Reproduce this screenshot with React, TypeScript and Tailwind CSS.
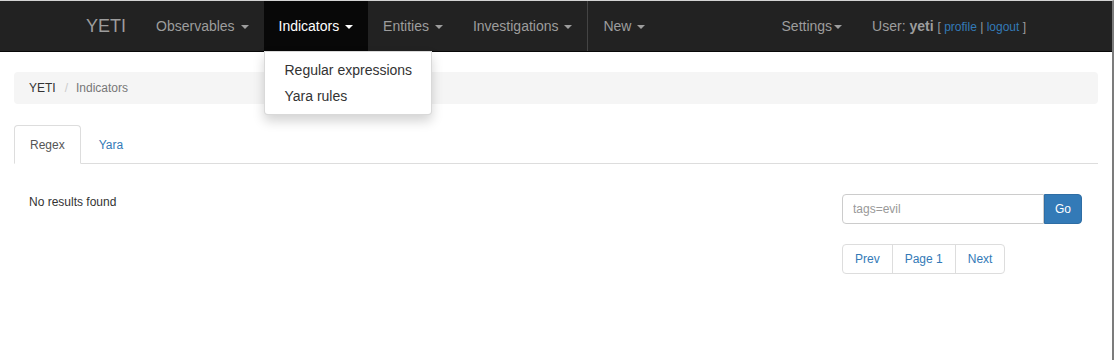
import React from 'react';

const Caret = () => (
  <span className="inline-block w-0 h-0 ml-[2px] align-middle border-t-4 border-x-4 border-x-transparent border-t-current" />
);

const navItems = ['Observables', 'Indicators', 'Entities', 'Investigations'];

export default function App() {
  return (
    <div className="w-[1114px] h-[360px] overflow-hidden bg-white border-t border-t-[#d4d4d4] border-r-2 border-r-[#7c7c7c] font-['Liberation_Sans',Arial,sans-serif] text-[14px] text-[#333]">
      {/* Top navbar */}
      <nav className="h-[51px] bg-[#222] border-b border-b-[#080808]">
        <div className="w-[970px] mx-auto px-[15px] h-[50px] flex">
          <a className="-ml-[15px] px-[15px] text-[18px] leading-[50px] text-[#9d9d9d]">YETI</a>
          <ul className="flex">
            {navItems.map((item) => {
              const active = item === 'Indicators';
              return (
                <li key={item} className="relative">
                  <a
                    className={
                      active
                        ? 'block px-[15px] py-[15px] leading-[20px] whitespace-pre text-white bg-[#080808]'
                        : 'block px-[15px] py-[15px] leading-[20px] whitespace-pre text-[#9d9d9d]'
                    }
                  >
                    {item} <Caret />
                  </a>
                  {active && (
                    <ul className="absolute left-0 top-full z-10 w-[168px] py-[5px] bg-white border border-[rgba(0,0,0,0.15)] rounded-b-[4px] shadow-[0_6px_12px_rgba(0,0,0,0.175)] whitespace-nowrap">
                      <li className="px-[20px] py-[3px] leading-[20px] text-[#333]">Regular expressions</li>
                      <li className="px-[20px] py-[3px] leading-[20px] text-[#333]">Yara rules</li>
                    </ul>
                  )}
                </li>
              );
            })}
            <li className="border-l border-l-[#444]">
              <a className="block px-[15px] py-[15px] leading-[20px] whitespace-pre text-[#9d9d9d]">
                New <Caret />
              </a>
            </li>
          </ul>
          <ul className="flex ml-auto -mr-[15px]">
            <li>
              <a className="block px-[15px] py-[15px] leading-[20px] text-[#9d9d9d]">
                Settings<Caret />
              </a>
            </li>
            <li className="px-[15px] py-[15px] leading-[20px] text-[#9d9d9d] whitespace-pre">
              User: <b>yeti</b>{' '}
              <span className="text-[12px]">
                [ <a className="text-[#337ab7]">profile</a> | <a className="text-[#337ab7]">logout</a> ]
              </span>
            </li>
          </ul>
        </div>
      </nav>

      {/* Page body */}
      <div className="px-[14px] pt-[20px]">
        <ol className="h-[32px] flex items-center px-[15px] bg-[#f5f5f5] rounded-[4px] text-[12px]">
          <li className="text-[#333]">YETI</li>
          <li className="pl-[9px] pr-[8px] text-[#ccc]">/</li>
          <li className="text-[#777]">Indicators</li>
        </ol>

        <ul className="mt-[21px] flex items-end border-b border-b-[#ddd] text-[12px]">
          <li className="-mb-px mr-[2px]">
            <a className="h-[39px] flex items-center px-[15px] bg-white text-[#555] border border-[#ddd] border-b-transparent rounded-t-[4px]">
              Regex
            </a>
          </li>
          <li className="-mb-px">
            <a className="h-[39px] flex items-center px-[15px] text-[#337ab7] border border-transparent">Yara</a>
          </li>
        </ul>

        <div className="mt-[30px] flex justify-between">
          <p className="pl-[15px] text-[12px] leading-[14px] pt-[1px]">No results found</p>
          <div className="w-[240px] mr-[16px]">
            <div className="flex h-[30px]">
              <input
                className="flex-1 min-w-0 px-[10px] text-[12px] border border-[#ccc] rounded-l-[4px] placeholder:text-[#999] outline-none"
                placeholder="tags=evil"
              />
              <button className="w-[38px] bg-[#337ab7] border border-[#2e6da4] rounded-r-[4px] text-white text-[12px]">
                Go
              </button>
            </div>
            <ul className="mt-[20px] flex text-[12px] text-[#337ab7]">
              {['Prev', 'Page 1', 'Next'].map((p, i) => (
                <li
                  key={p}
                  className={
                    i === 0
                      ? 'px-[12px] py-[5px] leading-[18px] border border-[#ddd] rounded-l-[4px]'
                      : i === 2
                        ? '-ml-px px-[12px] py-[5px] leading-[18px] border border-[#ddd] rounded-r-[4px]'
                        : '-ml-px px-[12px] py-[5px] leading-[18px] border border-[#ddd]'
                  }
                >
                  {p}
                </li>
              ))}
            </ul>
          </div>
        </div>
      </div>
    </div>
  );
}
